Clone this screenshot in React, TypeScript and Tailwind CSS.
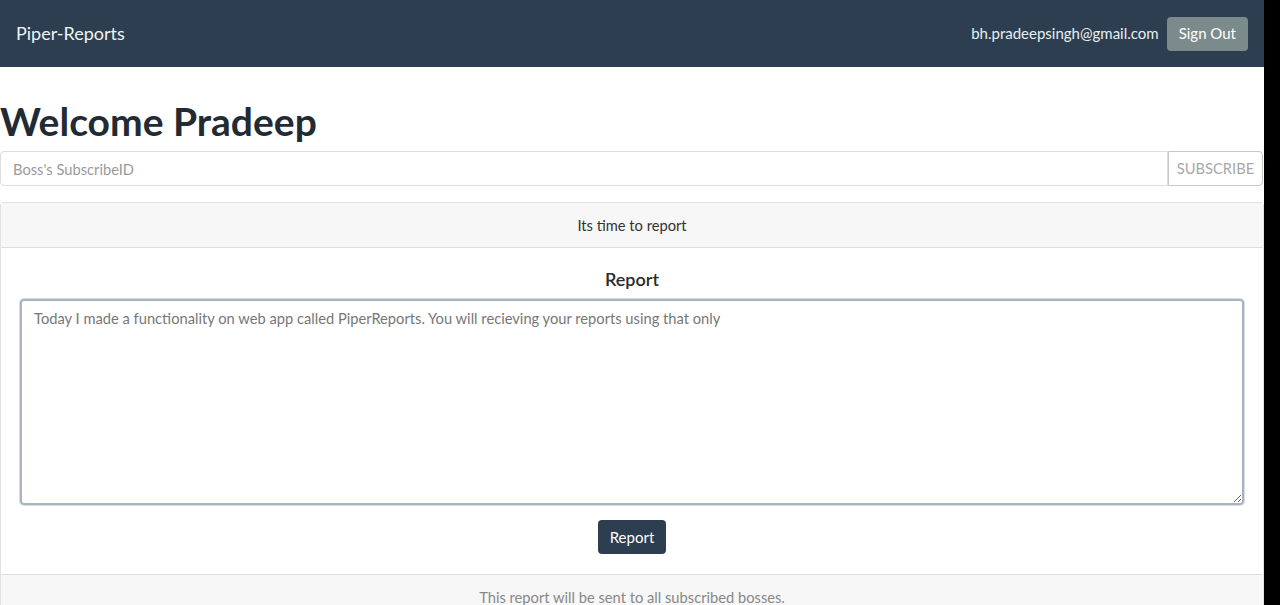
import React from "react";

export default function App() {
  return (
    <div className="flex h-[605px] w-[1280px] overflow-hidden bg-black" style={{ fontFamily: "Lato, 'Noto Sans', sans-serif" }}>
      <div className="flex w-[1264px] flex-col bg-white">
        <nav className="flex h-[67px] shrink-0 items-center justify-between bg-[#2c3e50] pl-4 pr-4">
          <span className="text-[18px] text-[#eef4f4]">Piper-Reports</span>
          <div className="flex items-center gap-2">
            <span className="text-[15px] text-[#e8eef0]">bh.pradeepsingh@gmail.com</span>
            <button className="h-[34px] rounded-[4px] bg-[#7b8a8b] px-3 text-[15px] text-white">Sign Out</button>
          </div>
        </nav>
        <h1 className="mt-[30px] shrink-0 text-[39px] font-bold leading-[48px] text-[#222b33]">Welcome Pradeep</h1>
        <div className="mt-[6px] flex h-[35px] shrink-0 pr-px">
          <input
            className="h-[35px] flex-1 rounded-l-[4px] border border-[#dcdcdc] px-3 text-[14.7px] text-[#888] outline-none placeholder:text-[#9a9a9a]"
            placeholder="Boss's SubscribeID"
          />
          <button className="h-[35px] w-[95px] rounded-r-[4px] border border-[#c8c8c8] text-[14.7px] text-[#a8a8a8]">SUBSCRIBE</button>
        </div>
        <div className="mt-[16px] flex flex-1 flex-col rounded-t-[4px] border border-b-0 border-[#e2e2e2]">
          <div className="flex h-[45px] shrink-0 items-center justify-center border-b border-[#dedede] bg-[#f7f7f7] text-[14.7px] text-[#333]">
            Its time to report
          </div>
          <div className="flex flex-col items-center px-[19px] pt-[18px]">
            <div className="text-[18px] font-semibold leading-[26px] text-[#2a2a2a]">Report</div>
            <textarea
              className="mt-[7px] h-[206px] w-full resize-y rounded-[4px] border-2 border-[#a9b4c0] px-3 py-[6px] text-[14.7px] text-[#777] shadow-[0_0_0_1px_#d8dde3] outline-none"
              defaultValue="Today I made a functionality on web app called PiperReports. You will recieving your reports using that only"
            />
            <button className="mt-[15px] h-[34px] rounded-[4px] bg-[#2c3e50] px-3 text-[15px] text-white">Report</button>
          </div>
          <div className="mt-[20px] flex flex-1 justify-center border-t border-[#dedede] bg-[#f7f7f7] pt-[12px] text-[14.7px] leading-[20px] text-[#888]">
            This report will be sent to all subscribed bosses.
          </div>
        </div>
      </div>
    </div>
  );
}
